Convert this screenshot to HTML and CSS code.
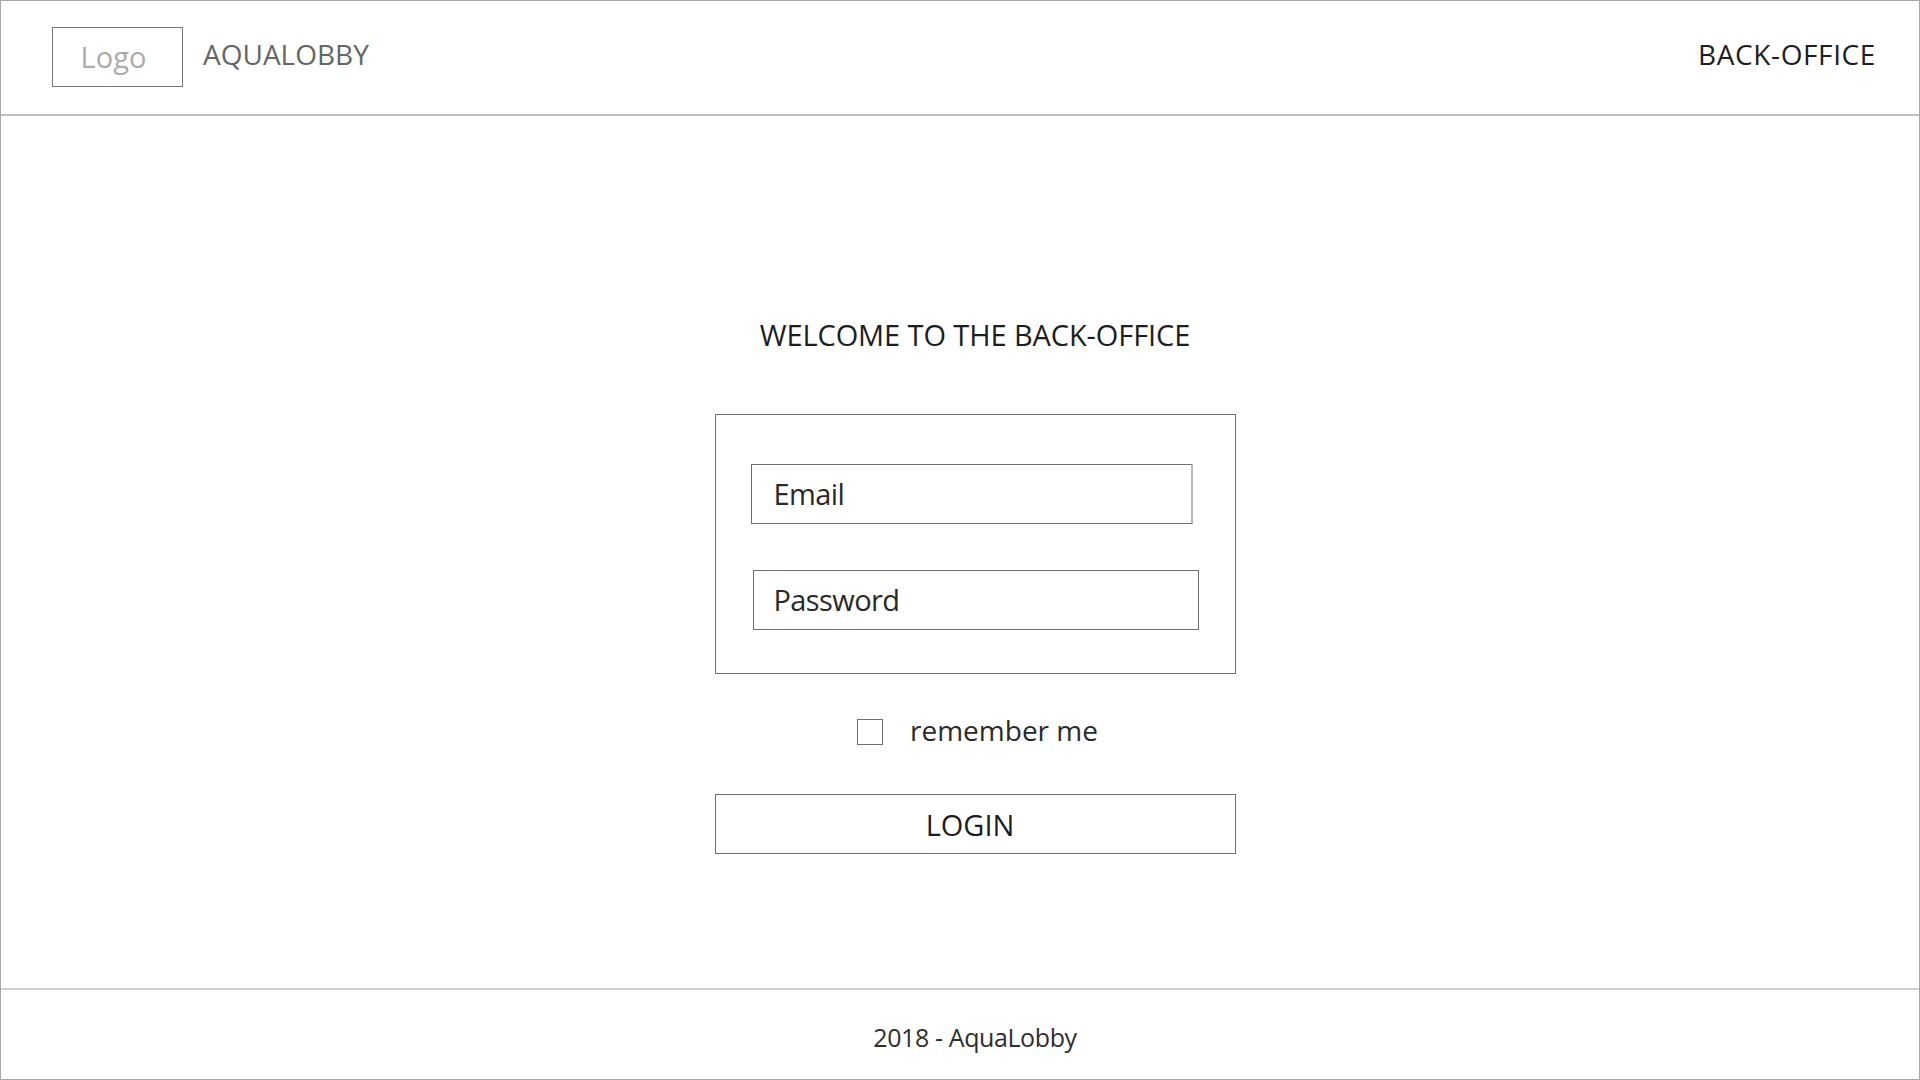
FILE: index.html
```html
<!DOCTYPE html>
<html lang="en">
<head>
<meta charset="utf-8">
<title>AquaLobby Back-Office</title>
<link rel="stylesheet" href="styles.css">
</head>
<body>
<div class="page">
  <header class="topbar">
    <div class="brand">
      <div class="logo-box"><span>Logo</span></div>
      <span class="brand-name">AQUALOBBY</span>
    </div>
    <div class="section-name">BACK-OFFICE</div>
  </header>
  <main class="main">
    <div class="login">
      <h1 class="welcome">WELCOME TO THE BACK-OFFICE</h1>
      <div class="form-box">
        <div class="field field-email">Email</div>
        <div class="field field-password">Password</div>
      </div>
      <div class="remember">
        <span class="checkbox"></span>
        <span class="remember-text">remember me</span>
      </div>
      <div class="login-btn">LOGIN</div>
    </div>
  </main>
  <footer class="footer">2018 - AquaLobby</footer>
</div>
</body>
</html>
```
FILE: styles.css
```css
* { box-sizing: border-box; }
html, body { margin: 0; padding: 0; background: #fff; }
body { font-family: "Open Sans", "Noto Sans", sans-serif; }

.page {
  width: 1920px;
  height: 1080px;
  border: 1px solid #a8a8a8;
  display: flex;
  flex-direction: column;
  background: #fff;
}

.topbar {
  height: 115px;
  flex: none;
  border-bottom: 2px solid #bdbdbd;
  display: flex;
  align-items: center;
  justify-content: space-between;
  padding: 0 43px 8px 51px;
}
.brand { display: flex; align-items: center; }
.logo-box {
  width: 131px;
  height: 60px;
  border: 1px solid #767676;
  display: flex;
  align-items: center;
  justify-content: center;
  padding: 0 8px 0 0;
  margin-top: 6px;
}
.logo-box span { font-size: 29px; color: #ababab; }
.brand-name {
  margin-left: 20px;
  font-size: 28px;
  color: #666;
}
.section-name {
  font-size: 28px;
  color: #1e1e1e;
  letter-spacing: 0.6px;
}

.main {
  flex: 1;
  display: flex;
  justify-content: center;
  padding-left: 30px;
}
.login {
  width: 521px;
  display: flex;
  flex-direction: column;
  align-items: center;
}
.welcome {
  margin: 199px 0 0;
  font-weight: 400;
  font-size: 29px;
  line-height: 40px;
  color: #1e1e1e;
  letter-spacing: -0.1px;
}
.form-box {
  margin-top: 59px;
  width: 521px;
  height: 260px;
  border: 1px solid #707070;
  display: flex;
  flex-direction: column;
  align-items: flex-start;
  padding: 49px 0 0 35px;
  gap: 46px;
}
.field {
  height: 60px;
  border: 1px solid #707070;
  display: flex;
  align-items: center;
  font-size: 29px;
  color: #2a2a2a;
  letter-spacing: -0.6px;
  padding-bottom: 2px;
}
.field-email {
  width: 442px;
  padding-left: 22px;
  border-right: 2px solid #bcbcbc;
}
.field-password {
  width: 446px;
  margin-left: 2px;
  padding-left: 20px;
}

.remember {
  margin-top: 38px;
  margin-left: 5px;
  height: 40px;
  display: flex;
  align-items: center;
  gap: 27px;
}
.checkbox {
  width: 26px;
  height: 26px;
  border: 1px solid #6e6e6e;
}
.remember-text {
  font-size: 28px;
  line-height: 40px;
  color: #2a2a2a;
  padding-bottom: 4px;
}
.login-btn {
  margin-top: 42px;
  width: 521px;
  height: 60px;
  border: 1px solid #707070;
  display: flex;
  align-items: center;
  justify-content: center;
  font-size: 29px;
  color: #1e1e1e;
  padding: 0 10px 0 0;
}

.footer {
  height: 91px;
  flex: none;
  border-top: 2px solid #cfcfcf;
  display: flex;
  align-items: center;
  justify-content: center;
  padding: 4px 0 0 30px;
  font-size: 25px;
  color: #2e2e2e;
  letter-spacing: -0.4px;
}
```
